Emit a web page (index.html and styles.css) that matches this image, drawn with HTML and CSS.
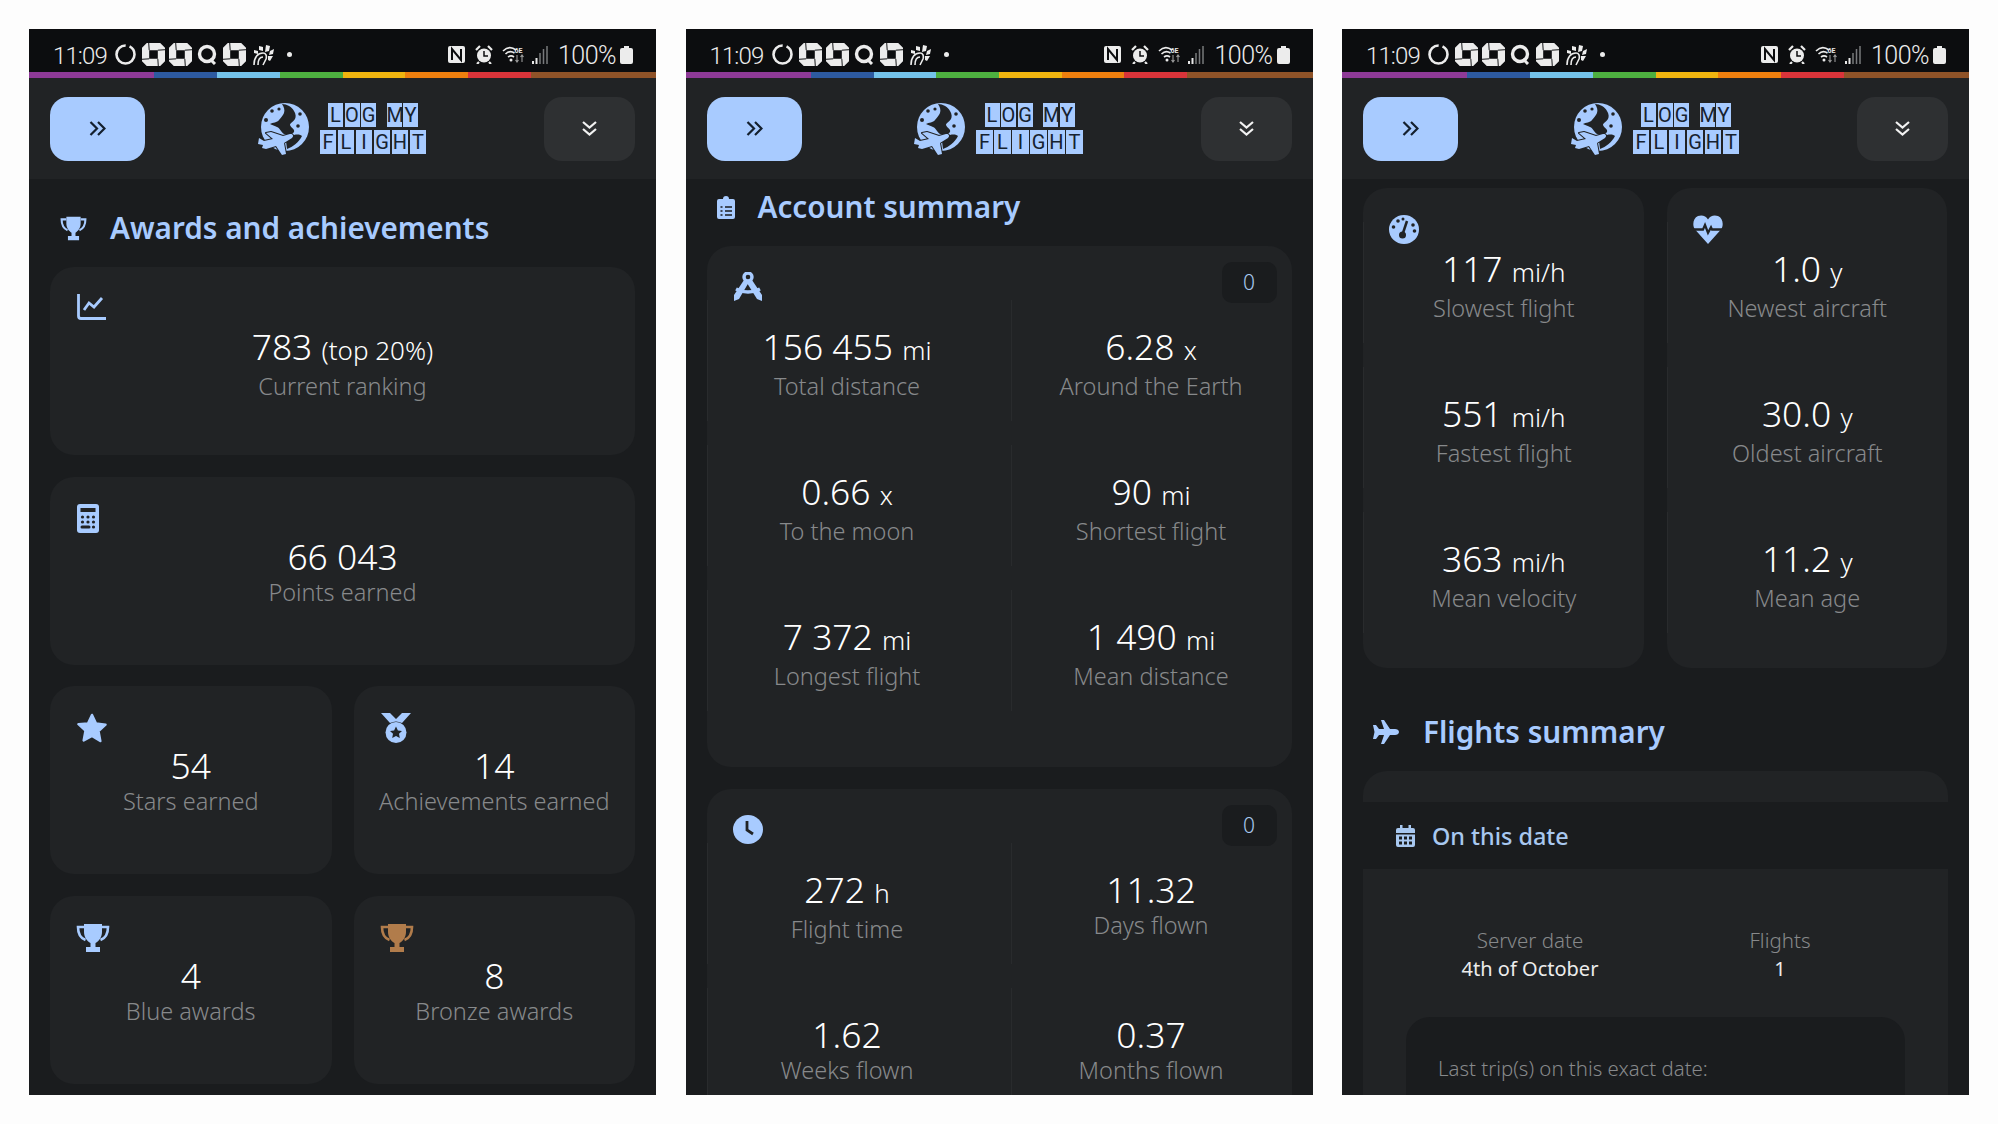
FILE: index.html
```html
<!DOCTYPE html>
<html lang="en">
<head>
<meta charset="utf-8">
<title>Log My Flight</title>
<link rel="stylesheet" href="styles.css">
</head>
<body>
<svg class="defs" xmlns="http://www.w3.org/2000/svg">
  <symbol id="i-ring" viewBox="0 0 21 21"><path d="M10.5 1.5a9 9 0 1 0 0 18 9 9 0 0 0 0-18z" fill="none" stroke="currentColor" stroke-width="2.6" stroke-dasharray="52 4"/></symbol>
  <symbol id="i-chase" viewBox="0 0 24 24"><path fill="currentColor" fill-rule="evenodd" d="M5 0h14l5 5v14l-5 5H5l-5-5V5zM7.500 7.500v9h9v-9z"/><path d="M7 0l.5 7.500M24 7l-7.500.5M17 24l-.5-7.500M0 17l7.500-.5" stroke="#0c0d0f" stroke-width="1"/></symbol>
  <symbol id="i-q" viewBox="0 0 20 21"><circle cx="10" cy="10" r="7.5" fill="none" stroke="currentColor" stroke-width="3.4"/><path d="M13 15l5 5" stroke="currentColor" stroke-width="3"/></symbol>
  <symbol id="i-chick" viewBox="0 0 22 22"><g fill="none" stroke="currentColor" stroke-width="1.6"><path d="M2 21c0-8 4-12 9-12 3 0 4 3 3 6l-3 6"/><path d="M6 21c0-5 2-8 5-8"/></g><g fill="currentColor"><path d="M14 1l4 1-1 5-4 1z"/><path d="M18 7l4-2-1 5-4 1z"/><path d="M7 2l4 1 0 4-4-1z"/><path d="M2 6l4 1 0 3-4-1z"/><path d="M16 12l5 0-3 5-2-1z"/></g></symbol>
  <symbol id="i-nfc" viewBox="0 0 19 19"><rect x="1" y="1" width="17" height="17" rx="2" fill="currentColor"/><path d="M5 15V4l9 11V4" fill="none" stroke="#0c0d0f" stroke-width="2"/></symbol>
  <symbol id="i-alarm" viewBox="0 0 18 19"><circle cx="9" cy="10.5" r="7" fill="currentColor"/><path d="M9 6v5h4" fill="none" stroke="#0c0d0f" stroke-width="1.5"/><path d="M1 5l4-4M17 5l-4-4M4 17l-2 2M14 17l2 2" stroke="currentColor" stroke-width="2.2"/></symbol>
  <symbol id="i-wifi" viewBox="0 0 23 19"><g fill="none" stroke="currentColor" stroke-width="1.6"><path d="M1 6c4-4 9-4 13-1"/><path d="M3.5 9c3-3 6-3 9-1"/><path d="M6 12c2-1.500 4-1.500 6 0"/></g><circle cx="9" cy="15" r="1.500" fill="currentColor"/><text x="12.500" y="7.500" class="wifi-txt">6E</text><path d="M15 10v7M20 10v7M13.500 15l1.500 2 1.500-2M18.500 12l1.500-2 1.500 2" fill="none" stroke="#9a9a9a" stroke-width="1.100"/></symbol>
  <symbol id="i-signal" viewBox="0 0 16 19"><path d="M1 19v-3M4.500 19v-6" stroke="#e8e8e8" stroke-width="2"/><path d="M8 19V8M11.500 19V4M15 19V1" stroke="#77797b" stroke-width="1.500"/></symbol>
  <symbol id="i-batt" viewBox="0 0 13 18"><path fill="currentColor" d="M4 0h5v2h2a2 2 0 0 1 2 2v12a2 2 0 0 1-2 2H2a2 2 0 0 1-2-2V4a2 2 0 0 1 2-2h2z"/></symbol>

  <symbol id="i-right" viewBox="0 0 17 15"><path d="M1.500 1l6.500 6.500L1.500 14M9 1l6.500 6.500L9 14" fill="none" stroke="currentColor" stroke-width="2.200"/></symbol>
  <symbol id="i-down" viewBox="0 0 15 15"><path d="M1 1l6.500 5.500L14 1M1 8l6.500 5.500L14 8" fill="none" stroke="currentColor" stroke-width="2.200"/></symbol>

  <symbol id="i-globe" viewBox="0 0 52 53"><circle cx="28" cy="25" r="24" fill="currentColor"/>
    <path fill="#212325" d="M25 2c5 0 10 3 12 7 2 3 2 6 1 8-2 3-5 4-5 6 1 3 5 4 4 7-2 3-7 3-10 2-3-2-4-6-7-7-2-1-5-2-7-3 3-2 7-1 9-4 2-2 4-5 5-7 1-3 0-6-2-9z"/>
    <path fill="#212325" d="M37 33c4-1 7 0 8 1-3 6-9 11-15 13l-1-8c3-2 5-5 8-6z"/>
    <g fill="#212325"><circle cx="15" cy="9" r="1.800"/><circle cx="9" cy="18" r="2"/><circle cx="22" cy="7" r="1.600"/><circle cx="43" cy="12" r="1.800"/><circle cx="41" cy="24" r="1.800"/></g>
    <path fill="currentColor" stroke="#212325" stroke-width="2" paint-order="stroke" stroke-linejoin="round" d="M1 42l1-6 5 3 9-2-7-6 5-1 12 4 7-2c3-.5 4 2 2 4l-8 5 2 11-4 1-6-9-10 3-4-1 1-3z"/></symbol>

  <symbol id="i-trophy" viewBox="0 0 34 30" preserveAspectRatio="none"><path fill="currentColor" d="M8 1h18v8c0 5-3 9-6.500 11v4h4.500v5H10v-5h4.500v-4C11 18 8 14 8 9z"/><path d="M8 4H2c0 7 2 11 7.500 13M26 4h6c0 7-2 11-7.500 13" fill="none" stroke="currentColor" stroke-width="2.600"/></symbol>
  <symbol id="i-clip" viewBox="0 0 18 23" preserveAspectRatio="none"><path fill="currentColor" d="M6 3a3 3 0 0 1 6 0h4a2 2 0 0 1 2 2v16a2 2 0 0 1-2 2H2a2 2 0 0 1-2-2V5a2 2 0 0 1 2-2z"/><path d="M3.500 11h2M8 11h7M3.500 15h2M8 15h7M3.500 19h2M8 19h7" stroke="#1a1c1e" stroke-width="1.500"/></symbol>
  <symbol id="i-chart" viewBox="0 0 29 26" preserveAspectRatio="none"><path d="M1.500 0v22a2.500 2.500 0 0 0 2.500 2.500h25" fill="none" stroke="currentColor" stroke-width="2.800"/><path d="M7 16l5-7 5 4 8-9" fill="none" stroke="currentColor" stroke-width="2.800"/></symbol>
  <symbol id="i-calc" viewBox="0 0 22 29" preserveAspectRatio="none"><rect width="22" height="29" rx="3" fill="currentColor"/><rect x="3.500" y="4" width="15" height="4" fill="#212325"/><g fill="#212325"><circle cx="5.500" cy="13" r="1.600"/><circle cx="11" cy="13" r="1.600"/><circle cx="16.500" cy="13" r="1.600"/><circle cx="5.500" cy="18" r="1.600"/><circle cx="11" cy="18" r="1.600"/><circle cx="16.500" cy="18" r="1.600"/><rect x="3.500" y="21.500" width="10" height="3" rx="1.500"/><circle cx="16.500" cy="23" r="1.600"/></g></symbol>
  <symbol id="i-star" viewBox="0 0 30 30" preserveAspectRatio="none"><path fill="currentColor" stroke="currentColor" stroke-width="2.500" stroke-linejoin="round" d="M15 2l4 8.500 9.500 1.200-7 6.500 1.800 9.800L15 23l-8.300 4.500 1.800-9.800-7-6.500L11 10.500z"/></symbol>
  <symbol id="i-medal" viewBox="0 0 30 30" preserveAspectRatio="none"><path fill="currentColor" d="M0 0h9l6 6 6-6h9l-9 10c-4-2-8-2-12 0z"/><circle cx="15" cy="19.500" r="10.500" fill="currentColor"/><path fill="#212325" d="M15 13.500l1.900 3.900 4.100.5-3 2.900.8 4.200-3.800-2.100-3.800 2.100.8-4.200-3-2.900 4.100-.5z"/></symbol>
  <symbol id="i-compass" viewBox="0 0 30 29" preserveAspectRatio="none"><circle cx="15" cy="5" r="4" fill="none" stroke="currentColor" stroke-width="3.400"/><path fill="currentColor" d="M11 8l5 2L6 27l-5 2 0-6zM19 8l10 15 0 6-5-2-10-16z"/><path d="M3 17c8 4 16 4 24 0" fill="none" stroke="currentColor" stroke-width="3.600"/></symbol>
  <symbol id="i-clock" viewBox="0 0 30 29" preserveAspectRatio="none"><ellipse cx="15" cy="14.500" rx="15" ry="14.500" fill="currentColor"/><path d="M14 6v9l6 4" fill="none" stroke="#212325" stroke-width="2.800"/></symbol>
  <symbol id="i-gauge" viewBox="0 0 30 29" preserveAspectRatio="none"><ellipse cx="15" cy="14.500" rx="15" ry="14.500" fill="currentColor"/><path d="M18 6l-4 12" stroke="#212325" stroke-width="2.500"/><circle cx="13.500" cy="20" r="3.500" fill="#212325"/><g fill="#212325"><circle cx="9" cy="6" r="1.800"/><circle cx="4.500" cy="12" r="1.800"/><circle cx="24" cy="10" r="1.800"/><circle cx="25.500" cy="16" r="1.800"/><circle cx="14" cy="4" r="1.500"/></g></symbol>
  <symbol id="i-heart" viewBox="0 0 30 26" preserveAspectRatio="none"><path fill="currentColor" d="M15 26L2 13C-1 9 0 3 5 1c4-1.500 8 0 10 3 2-3 6-4.500 10-3 5 2 6 8 3 12z"/><path d="M0 13h10l2-4 3 7 3-5 1 2h11" fill="none" stroke="#212325" stroke-width="2.200"/></symbol>
  <symbol id="i-plane" viewBox="0 0 26 24" preserveAspectRatio="none"><path fill="currentColor" d="M26 12c0-2-2-3-4-3h-5L11 0H8l3 9H6L3 5H0l1.500 7L0 19h3l3-4h5l-3 9h3l6-9h5c2 0 4-1 4-3z"/></symbol>
  <symbol id="i-cal" viewBox="0 0 19 22" preserveAspectRatio="none"><path fill="currentColor" d="M4 0h2.500v3h6V0H15v3h2a2 2 0 0 1 2 2v3H0V5a2 2 0 0 1 2-2h2zM0 9.500h19V20a2 2 0 0 1-2 2H2a2 2 0 0 1-2-2z"/><g fill="#1a1c1e"><rect x="3" y="11.500" width="3" height="3"/><rect x="8" y="11.500" width="3" height="3"/><rect x="13" y="11.500" width="3" height="3"/><rect x="3" y="16.500" width="3" height="3"/><rect x="8" y="16.500" width="3" height="3"/><rect x="13" y="16.500" width="3" height="3"/></g></symbol>
</svg>

<section class="phone">
  <div class="status">
    <span class="time">11:09</span>
    <svg class="s-ring"><use href="#i-ring"/></svg><svg class="s-chase"><use href="#i-chase"/></svg><svg class="s-chase"><use href="#i-chase"/></svg><svg class="s-q"><use href="#i-q"/></svg><svg class="s-chase"><use href="#i-chase"/></svg><svg class="s-chick"><use href="#i-chick"/></svg><span class="s-dot"></span>
    <span class="s-right"><svg class="s-nfc"><use href="#i-nfc"/></svg><svg class="s-alarm"><use href="#i-alarm"/></svg><svg class="s-wifi"><use href="#i-wifi"/></svg><svg class="s-signal"><use href="#i-signal"/></svg><span class="pct">100%</span><svg class="s-batt"><use href="#i-batt"/></svg></span>
  </div>
  <div class="rainbow"><i class="r2 c1"></i><i class="c2"></i><i class="c3"></i><i class="c4"></i><i class="c5"></i><i class="c6"></i><i class="c7"></i><i class="r2 c8"></i></div>
  <header class="topbar">
    <button class="btn btn-blue"><svg class="chev"><use href="#i-right"/></svg></button>
    <div class="logo"><svg class="globe"><use href="#i-globe"/></svg><div class="tiles"><div class="tile-row row-a"><b>L</b><b>O</b><b>G</b><b class="sp">M</b><b>Y</b></div><div class="tile-row row-b"><b>F</b><b>L</b><b>I</b><b>G</b><b>H</b><b>T</b></div></div></div>
    <button class="btn btn-grey"><svg class="chev-d"><use href="#i-down"/></svg></button>
  </header>
  <main class="content">
    <h2 class="heading heading-awards"><svg class="h-trophy"><use href="#i-trophy"/></svg>Awards and achievements</h2>
    <div class="awards">
      <article class="card wide"><div class="chead"><svg class="ic ic-chart"><use href="#i-chart"/></svg></div><div class="cell"><div class="val">783 <small>(top 20%)</small></div><div class="lab">Current ranking</div></div></article>
      <article class="card wide"><div class="chead"><svg class="ic ic-calc"><use href="#i-calc"/></svg></div><div class="cell"><div class="val">66 043</div><div class="lab">Points earned</div></div></article>
      <article class="card"><div class="chead"><svg class="ic ic-star"><use href="#i-star"/></svg></div><div class="cell"><div class="val">54</div><div class="lab">Stars earned</div></div></article>
      <article class="card"><div class="chead"><svg class="ic ic-star"><use href="#i-medal"/></svg></div><div class="cell"><div class="val">14</div><div class="lab">Achievements earned</div></div></article>
      <article class="card"><div class="chead"><svg class="ic ic-trophy"><use href="#i-trophy"/></svg></div><div class="cell"><div class="val">4</div><div class="lab">Blue awards</div></div></article>
      <article class="card"><div class="chead"><svg class="ic ic-trophy bronze"><use href="#i-trophy"/></svg></div><div class="cell"><div class="val">8</div><div class="lab">Bronze awards</div></div></article>
    </div>
  </main>
</section>

<section class="phone">
  <div class="status">
    <span class="time">11:09</span>
    <svg class="s-ring"><use href="#i-ring"/></svg><svg class="s-chase"><use href="#i-chase"/></svg><svg class="s-chase"><use href="#i-chase"/></svg><svg class="s-q"><use href="#i-q"/></svg><svg class="s-chase"><use href="#i-chase"/></svg><svg class="s-chick"><use href="#i-chick"/></svg><span class="s-dot"></span>
    <span class="s-right"><svg class="s-nfc"><use href="#i-nfc"/></svg><svg class="s-alarm"><use href="#i-alarm"/></svg><svg class="s-wifi"><use href="#i-wifi"/></svg><svg class="s-signal"><use href="#i-signal"/></svg><span class="pct">100%</span><svg class="s-batt"><use href="#i-batt"/></svg></span>
  </div>
  <div class="rainbow"><i class="r2 c1"></i><i class="c2"></i><i class="c3"></i><i class="c4"></i><i class="c5"></i><i class="c6"></i><i class="c7"></i><i class="r2 c8"></i></div>
  <header class="topbar">
    <button class="btn btn-blue"><svg class="chev"><use href="#i-right"/></svg></button>
    <div class="logo"><svg class="globe"><use href="#i-globe"/></svg><div class="tiles"><div class="tile-row row-a"><b>L</b><b>O</b><b>G</b><b class="sp">M</b><b>Y</b></div><div class="tile-row row-b"><b>F</b><b>L</b><b>I</b><b>G</b><b>H</b><b>T</b></div></div></div>
    <button class="btn btn-grey"><svg class="chev-d"><use href="#i-down"/></svg></button>
  </header>
  <main class="content">
    <h2 class="heading heading-account"><svg class="h-clip"><use href="#i-clip"/></svg>Account summary</h2>
    <article class="card panel">
      <div class="phead"><svg class="ic ic-compass"><use href="#i-compass"/></svg><span class="badge">0</span></div>
      <div class="grid2">
        <div class="cell line"><div class="val">156 455 <small>mi</small></div><div class="lab">Total distance</div></div>
        <div class="cell line"><div class="val">6.28 <small>x</small></div><div class="lab">Around the Earth</div></div>
        <div class="cell line"><div class="val">0.66 <small>x</small></div><div class="lab">To the moon</div></div>
        <div class="cell line"><div class="val">90 <small>mi</small></div><div class="lab">Shortest flight</div></div>
        <div class="cell line"><div class="val">7 372 <small>mi</small></div><div class="lab">Longest flight</div></div>
        <div class="cell line"><div class="val">1 490 <small>mi</small></div><div class="lab">Mean distance</div></div>
      </div>
    </article>
    <article class="card panel panel-next">
      <div class="phead"><svg class="ic ic-compass"><use href="#i-clock"/></svg><span class="badge">0</span></div>
      <div class="grid2">
        <div class="cell line"><div class="val">272 <small>h</small></div><div class="lab">Flight time</div></div>
        <div class="cell line"><div class="val">11.32</div><div class="lab">Days flown</div></div>
        <div class="cell line"><div class="val">1.62</div><div class="lab">Weeks flown</div></div>
        <div class="cell line"><div class="val">0.37</div><div class="lab">Months flown</div></div>
      </div>
    </article>
  </main>
</section>

<section class="phone">
  <div class="status">
    <span class="time">11:09</span>
    <svg class="s-ring"><use href="#i-ring"/></svg><svg class="s-chase"><use href="#i-chase"/></svg><svg class="s-chase"><use href="#i-chase"/></svg><svg class="s-q"><use href="#i-q"/></svg><svg class="s-chase"><use href="#i-chase"/></svg><svg class="s-chick"><use href="#i-chick"/></svg><span class="s-dot"></span>
    <span class="s-right"><svg class="s-nfc"><use href="#i-nfc"/></svg><svg class="s-alarm"><use href="#i-alarm"/></svg><svg class="s-wifi"><use href="#i-wifi"/></svg><svg class="s-signal"><use href="#i-signal"/></svg><span class="pct">100%</span><svg class="s-batt"><use href="#i-batt"/></svg></span>
  </div>
  <div class="rainbow"><i class="r2 c1"></i><i class="c2"></i><i class="c3"></i><i class="c4"></i><i class="c5"></i><i class="c6"></i><i class="c7"></i><i class="r2 c8"></i></div>
  <header class="topbar">
    <button class="btn btn-blue"><svg class="chev"><use href="#i-right"/></svg></button>
    <div class="logo"><svg class="globe"><use href="#i-globe"/></svg><div class="tiles"><div class="tile-row row-a"><b>L</b><b>O</b><b>G</b><b class="sp">M</b><b>Y</b></div><div class="tile-row row-b"><b>F</b><b>L</b><b>I</b><b>G</b><b>H</b><b>T</b></div></div></div>
    <button class="btn btn-grey"><svg class="chev-d"><use href="#i-down"/></svg></button>
  </header>
  <main class="content content-speed">
    <div class="pair">
      <article class="card tall">
        <div class="thead"><svg class="ic ic-compass"><use href="#i-gauge"/></svg></div>
        <div class="stack">
          <div class="cell line"><div class="val">117 <small>mi/h</small></div><div class="lab">Slowest flight</div></div>
          <div class="cell line"><div class="val">551 <small>mi/h</small></div><div class="lab">Fastest flight</div></div>
          <div class="cell line"><div class="val">363 <small>mi/h</small></div><div class="lab">Mean velocity</div></div>
        </div>
      </article>
      <article class="card tall">
        <div class="thead"><svg class="ic ic-compass"><use href="#i-heart"/></svg></div>
        <div class="stack">
          <div class="cell line"><div class="val">1.0 <small>y</small></div><div class="lab">Newest aircraft</div></div>
          <div class="cell line"><div class="val">30.0 <small>y</small></div><div class="lab">Oldest aircraft</div></div>
          <div class="cell line"><div class="val">11.2 <small>y</small></div><div class="lab">Mean age</div></div>
        </div>
      </article>
    </div>
    <h2 class="heading heading-flights"><svg class="h-plane"><use href="#i-plane"/></svg>Flights summary</h2>
    <article class="card flights">
      <div class="band"><svg class="ic-cal"><use href="#i-cal"/></svg>On this date</div>
      <div class="facts">
        <div class="fact fact-a"><div class="f-lab">Server date</div><div class="f-val">4th of October</div></div>
        <div class="fact fact-b"><div class="f-lab">Flights</div><div class="f-val">1</div></div>
      </div>
      <div class="trip">Last trip(s) on this exact date:</div>
    </article>
  </main>
</section>
</body>
</html>
```

FILE: styles.css
```css
* { box-sizing: border-box; }
html, body { height: 100%; }
body {
  margin: 0;
  height: 1124px;
  overflow: hidden;
  padding: 29px 30px 29px 29px;
  display: flex;
  gap: 29.5px;
  background: #fdfdfd;
  font-family: "Noto Sans", "Open Sans", sans-serif;
  color: #fff;
}
.defs { display: none; }
.wifi-txt { font: 700 7px "Roboto", sans-serif; fill: #e8e8e8; }

.phone {
  width: 627px;
  height: 1066px;
  flex: none;
  display: flex;
  flex-direction: column;
  overflow: hidden;
  background: #1a1c1e;
}

/* status bar */
.status {
  height: 43px;
  flex: none;
  background: #0c0d0f;
  color: #ececec;
  display: flex;
  align-items: center;
  padding: 8px 23px 0 24px;
}
.status svg { flex: none; display: block; }
.time { font: 300 24px/24px "Roboto", sans-serif; width: 62px; letter-spacing: -.9px; margin-top: 3px; }
.s-ring { width: 21px; height: 21px; margin-right: 6px; }
.s-chase { width: 23px; height: 23px; margin-right: 4px; }
.s-q { width: 20px; height: 21px; margin: 0 6px 0 1px; }
.s-chick { width: 22px; height: 22px; margin-left: 2px; }
.s-dot { width: 5px; height: 5px; border-radius: 50%; background: #ececec; margin-left: 13px; }
.s-right { margin-left: auto; display: flex; align-items: center; }
.s-nfc { width: 19px; height: 19px; margin-right: 9px; }
.s-alarm { width: 18px; height: 19px; margin-right: 9px; }
.s-wifi { width: 23px; height: 19px; margin-right: 7px; }
.s-signal { width: 16px; height: 19px; margin-right: 10px; }
.pct { font: 300 25px/24px "Roboto", sans-serif; letter-spacing: -.5px; margin: 3px 4px 0 0; }
.s-batt { width: 13px; height: 18px; }

.rainbow { height: 6px; flex: none; display: flex; }
.rainbow i { flex: 1; }
.rainbow .r2 { flex: 2; }
.c1 { background: #8e3a97; }
.c2 { background: #2d5aa0; }
.c3 { background: #74c3ea; }
.c4 { background: #4daf3f; }
.c5 { background: #f0b40f; }
.c6 { background: #ee7f0e; }
.c7 { background: #d9343a; }
.c8 { background: #8f5328; }

/* top bar */
.topbar {
  height: 101px;
  flex: none;
  background: #212325;
  display: flex;
  align-items: center;
  justify-content: space-between;
  padding: 0 21px;
}
.btn {
  height: 64px;
  border: 0;
  border-radius: 18px;
  display: flex;
  align-items: center;
  justify-content: center;
  padding: 0;
}
.btn-blue { width: 95px; background: #a8cbff; color: #14202e; }
.btn-grey { width: 91px; background: #2e3032; color: #f2f2f2; }
.chev { width: 17px; height: 15px; }
.chev-d { width: 15px; height: 15px; }
.logo { display: flex; align-items: center; gap: 11px; margin-right: 6px; height: 54px; color: #a8cbff; }
.globe { width: 52px; height: 53px; flex: none; }
.tiles { display: flex; flex-direction: column; gap: 2.500px; align-items: center; }
.tile-row { display: flex; gap: 1.500px; }
.tile-row b {
  height: 24px;
  background: #a8cbff;
  color: #16222f;
  font: 400 20px/24px "Liberation Sans Narrow", "Roboto", sans-serif;
  text-align: center;
}
.row-a b { width: 15px; }
.row-b b { width: 16.500px; }
.tile-row .sp { margin-left: 9px; }

/* content */
.content { flex: 1; min-height: 0; overflow: hidden; padding: 0 21px; }
.content-speed { padding-top: 9px; }

.heading {
  margin: 0 0 19px;
  height: 40px;
  display: flex;
  align-items: center;
  gap: 23px;
  padding-left: 10px;
  font-size: 29.700px;
  line-height: 40px;
  font-weight: 600;
  color: #a8cbff;
}
.heading-awards { margin-top: 29px; }
.heading-account { margin-top: 8px; }
.heading-flights { margin-top: 44px; gap: 24px; }
.h-trophy { width: 27px; height: 25px; }
.h-clip { width: 18px; height: 23px; }
.h-plane { width: 26px; height: 24px; }

.card { background: #212325; border-radius: 24px; }
.awards { display: grid; grid-template-columns: 1fr 1fr; gap: 21.500px 22px; }
.wide { grid-column: 1 / -1; }
.awards .card { height: 188px; position: relative; }
.chead { height: 33px; padding: 27px 0 0 27px; }
.ic { display: block; color: #a8cbff; }
.ic-chart { width: 29px; height: 26px; }
.ic-calc { width: 22px; height: 29px; }
.ic-star { width: 30px; height: 30px; }
.ic-trophy { width: 34px; height: 30px; margin-left: -1px; }
.bronze { color: #b17c4b; }
.ic-compass { width: 30px; height: 29px; }

.cell { height: 121px; padding-top: 26px; text-align: center; }
.line { border-left: 1px solid #292b2d; }
.val { font-size: 35.400px; line-height: 40px; font-weight: 300; color: #fff; }
.val small { font-size: 26px; }
.lab { font-size: 23.500px; line-height: 32px; font-weight: 300; color: #87898b; }

.panel { height: 521px; }
.panel-next { margin-top: 22px; height: 600px; }
.phead { height: 54px; padding: 16px 15px 0 26px; display: flex; justify-content: space-between; align-items: flex-start; }
.phead .ic { margin-top: 10px; }
.badge {
  width: 55px;
  height: 41px;
  border-radius: 10px;
  background: #1a1c1e;
  color: #a8c8f0;
  font-size: 21px;
  font-weight: 300;
  line-height: 41px;
  text-align: center;
}
.grid2 { display: grid; grid-template-columns: 280px 280px; gap: 24px; }

.pair { display: grid; grid-template-columns: 280.500px 280.500px; gap: 23px; }
.tall { height: 480px; }
.thead { height: 34px; padding: 27px 0 0 26px; }
.stack { display: grid; gap: 24px; }

.flights { height: 400px; padding-top: 31px; }
.band {
  height: 67px;
  background: #1a1c1e;
  display: flex;
  align-items: center;
  gap: 17px;
  padding-left: 33px;
  font-size: 23.400px;
  font-weight: 500;
  color: #a8c8f0;
}
.ic-cal { width: 19px; height: 22px; }
.facts { display: flex; padding-top: 56px; height: 148px; }
.fact { text-align: center; flex: none; }
.fact-a { width: 334px; }
.fact-b { width: 166px; }
.f-lab { font-size: 20.500px; line-height: 30px; font-weight: 300; color: #87898b; }
.f-val { font-size: 20px; line-height: 28px; font-weight: 400; color: #ececec; }
.trip {
  margin: 0 43px;
  height: 200px;
  border-radius: 24px;
  background: #1a1c1e;
  padding: 36px 32px;
  font-size: 20.400px;
  line-height: 30px;
  font-weight: 300;
  color: #87898b;
}
```
